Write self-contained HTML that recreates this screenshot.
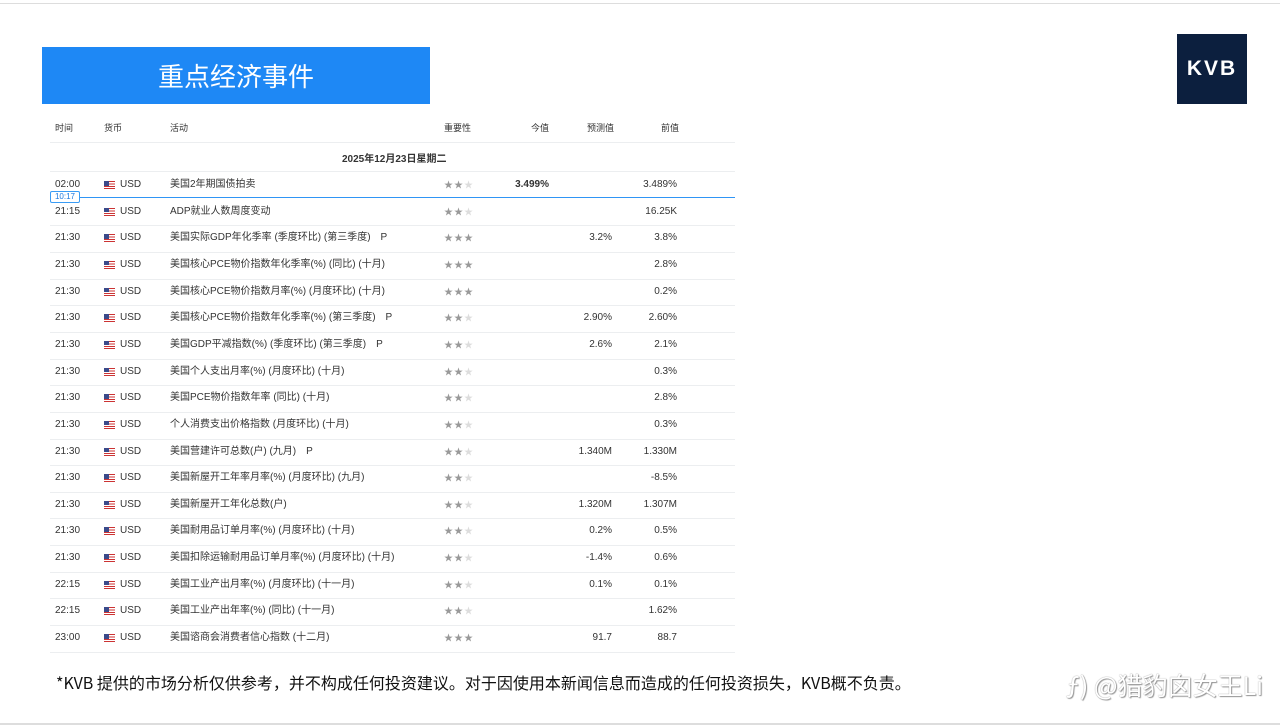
<!DOCTYPE html>
<html><head><meta charset="utf-8"><style>
*{margin:0;padding:0;box-sizing:border-box}
body{width:1280px;height:726px;background:#fff;position:relative;overflow:hidden;font-family:"Liberation Sans","Noto Sans CJK SC",sans-serif;color:#333}
.top{position:absolute;left:0;top:3px;width:1280px;height:1px;background:#ddd}
.bot{position:absolute;left:0;top:723px;width:1280px;height:2px;background:#ddd}
.title{position:absolute;left:42px;top:47px;width:388px;height:57px;background:#1e88f5;color:#fff;font-size:26px;line-height:57px;text-align:center;font-family:"Noto Sans CJK SC",sans-serif}
.logo{position:absolute;left:1177px;top:34px;width:70px;height:70px;background:#0c1f3e;color:#fff;font-size:21px;line-height:70px;text-align:center;letter-spacing:2px;font-weight:bold}
.h{position:absolute;top:121px;font-size:9px;color:#333}
.line{position:absolute;left:50px;width:685px;height:1px;background:#eceef0}
.r{position:absolute;left:0;width:1280px;font-size:10px;height:14px;line-height:14px}
.r span{position:absolute;top:0;white-space:nowrap}
.flag{width:11px;height:8px;top:3px!important;background:repeating-linear-gradient(#c33 0 1.2px,#fff 1.2px 2.4px)}
.flag:before{content:"";position:absolute;left:0;top:0;width:5px;height:4.5px;background:#3a4a8a}
.st{color:#999;font-size:9px;letter-spacing:1px}
.st i{font-style:normal;color:#ddd}
.rt{text-align:right}
.foot{position:absolute;left:56px;top:670px;font-size:16px;color:#111;font-family:"Noto Sans CJK SC",sans-serif;white-space:nowrap}
.wm{position:absolute;left:1066px;top:667px;font-size:25px;color:#fff;text-shadow:0 0 1px #777,1px 1px 1px #999;font-family:"Noto Sans CJK SC",sans-serif;white-space:nowrap}
.now{position:absolute;left:50px;top:196.5px;width:685px;height:1.5px;background:#2f95f5;z-index:2}
.nowt{position:absolute;left:50px;top:191px;width:30px;height:12px;border:1px solid #3a9cf5;background:#fff;color:#1e7ae0;font-size:8px;line-height:10px;text-align:center;border-radius:2px;z-index:3}
</style></head><body>
<div class="top"></div><div class="bot"></div>
<div class="title">重点经济事件</div>
<div class="logo">KVB</div>
<div class="h" style="left:55px">时间</div>
<div class="h" style="left:104px">货币</div>
<div class="h" style="left:170px">活动</div>
<div class="h" style="left:444px">重要性</div>
<div class="h" style="left:531px">今值</div>
<div class="h" style="left:587px">预测值</div>
<div class="h" style="left:661px">前值</div>
<div class="line" style="top:142px"></div>
<div style="position:absolute;left:342px;top:150px;font-size:10px;font-weight:bold;color:#333">2025年12月23日星期二</div>
<div class="line" style="top:171px"></div>
<div id="rows"></div>
<div class="now"></div><div class="nowt">10:17</div>
<div class="foot">*KVB 提供的市场分析仅供参考，并不构成任何投资建议。对于因使用本新闻信息而造成的任何投资损失，KVB概不负责。</div>
<div class="wm">ƒ) @猎豹囟女王Li</div>
<script>
var d=[["02:00","美国2年期国债拍卖",2,"3.499%","","3.489%"],
["21:15","ADP就业人数周度变动",2,"","","16.25K"],
["21:30","美国实际GDP年化季率 (季度环比) (第三季度)　P",3,"","3.2%","3.8%"],
["21:30","美国核心PCE物价指数年化季率(%) (同比) (十月)",3,"","","2.8%"],
["21:30","美国核心PCE物价指数月率(%) (月度环比) (十月)",3,"","","0.2%"],
["21:30","美国核心PCE物价指数年化季率(%) (第三季度)　P",2,"","2.90%","2.60%"],
["21:30","美国GDP平减指数(%) (季度环比) (第三季度)　P",2,"","2.6%","2.1%"],
["21:30","美国个人支出月率(%) (月度环比) (十月)",2,"","","0.3%"],
["21:30","美国PCE物价指数年率 (同比) (十月)",2,"","","2.8%"],
["21:30","个人消费支出价格指数 (月度环比) (十月)",2,"","","0.3%"],
["21:30","美国营建许可总数(户) (九月)　P",2,"","1.340M","1.330M"],
["21:30","美国新屋开工年率月率(%) (月度环比) (九月)",2,"","","-8.5%"],
["21:30","美国新屋开工年化总数(户)",2,"","1.320M","1.307M"],
["21:30","美国耐用品订单月率(%) (月度环比) (十月)",2,"","0.2%","0.5%"],
["21:30","美国扣除运输耐用品订单月率(%) (月度环比) (十月)",2,"","-1.4%","0.6%"],
["22:15","美国工业产出月率(%) (月度环比) (十一月)",2,"","0.1%","0.1%"],
["22:15","美国工业产出年率(%) (同比) (十一月)",2,"","","1.62%"],
["23:00","美国谘商会消费者信心指数 (十二月)",3,"","91.7","88.7"]];
var h="";d.forEach(function(r,i){var y=178+i*26.65;
var s="★".repeat(r[2])+"<i>"+"★".repeat(3-r[2])+"</i>";
h+='<div class="r" style="top:'+y+'px"><span style="left:55px">'+r[0]+'</span><span class="flag" style="left:104px"></span><span style="left:120px">USD</span><span style="left:170px">'+r[1]+'</span><span class="st" style="left:444px">'+s+'</span><span class="rt" style="right:731px;font-weight:bold">'+r[3]+'</span><span class="rt" style="right:668px">'+r[4]+'</span><span class="rt" style="right:603px">'+r[5]+'</span></div>';
if(i>1)h+='<div class="line" style="top:'+(y-6)+'px"></div>';});
h+='<div class="line" style="top:'+(178+18*26.65-6)+'px"></div>';
document.getElementById("rows").innerHTML=h;
</script>
</body></html>
